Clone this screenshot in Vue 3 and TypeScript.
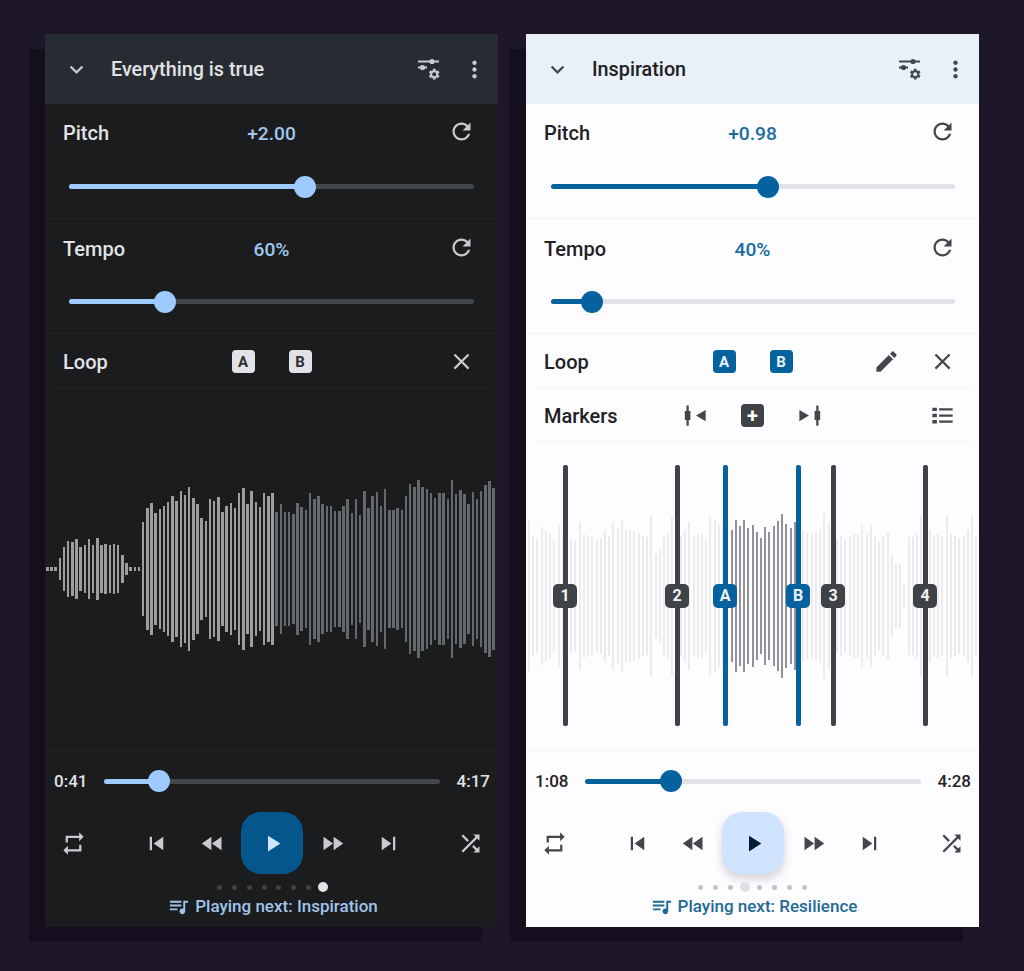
<script setup lang="ts">
/**
 * Two side by side player screens (dark / light) with pitch, tempo, loop and waveform.
 * Bar lists are half heights in px, in waveform order.
 */
interface Bar {
  h: number
  on: boolean
}

interface Marker {
  label: string
  left: number
  loop: boolean
}

interface Screen {
  theme: 'dark' | 'light'
  title: string
  pitch: string
  pitchAt: number
  tempo: string
  tempoAt: number
  bars: Bar[]
  markers: Marker[]
  current: string
  total: string
  seekAt: number
  page: number
  next: string
}

const bars = (list: number[], on: boolean): Bar[] => list.map((h) => ({ h, on }))

const darkPlayed = [
  2, 2, 2, 11, 22, 28, 27, 30, 22, 24, 30, 24, 31, 24, 25, 24, 25, 24, 14, 6, 2, 2, 2, 47, 61, 66, 56, 60, 63, 67, 73,
  68, 78, 74, 82, 71, 65, 51, 48, 70, 68, 72, 57, 63, 66, 61, 76, 81, 65, 78, 67, 62, 76, 73, 76,
]
const darkRest = [
  57, 65, 57, 57, 55, 66, 62, 59, 76, 70, 73, 65, 63, 63, 58, 58, 63, 70, 56, 70, 54, 78, 61, 73, 77, 63, 80, 59, 59,
  61, 59, 73, 85, 82, 89, 82, 80, 76, 71, 76, 76, 70, 89, 75, 79, 75, 65, 77, 70, 78, 84, 88, 81,
]
const lightBefore = [
  76, 59, 57, 69, 64, 62, 55, 71, 62, 60, 58, 56, 74, 62, 60, 59, 57, 58, 66, 60, 74, 67, 76, 66, 67, 64, 62, 60, 59,
  81, 42, 46, 59, 62, 79, 69, 60, 66, 74, 60, 62, 62, 57, 79, 76, 71, 73, 60,
]
const lightLoop = [66, 76, 70, 76, 68, 71, 64, 58, 69, 64, 70, 75, 82, 72, 68, 74]
const lightAfter = [
  60, 66, 63, 62, 64, 67, 83, 74, 72, 57, 60, 57, 59, 62, 62, 71, 62, 71, 60, 54, 60, 64, 42, 32, 32, 12, 59, 59, 62, 81,
  59, 66, 60, 62, 60, 81, 62, 60, 58, 60, 66, 81, 60,
]

const screens: Screen[] = [
  {
    theme: 'dark',
    title: 'Everything is true',
    pitch: '+2.00',
    pitchAt: 58.3,
    tempo: '60%',
    tempoAt: 23.7,
    bars: [...bars(darkPlayed, true), ...bars(darkRest, false)],
    markers: [],
    current: '0:41',
    total: '4:17',
    seekAt: 16.4,
    page: 7,
    next: 'Playing next: Inspiration',
  },
  {
    theme: 'light',
    title: 'Inspiration',
    pitch: '+0.98',
    pitchAt: 53.8,
    tempo: '40%',
    tempoAt: 10.1,
    bars: [...bars(lightBefore, false), ...bars(lightLoop, true), ...bars(lightAfter, false)],
    markers: [
      { label: '1', left: 39, loop: false },
      { label: '2', left: 151, loop: false },
      { label: 'A', left: 199, loop: true },
      { label: 'B', left: 272, loop: true },
      { label: '3', left: 307, loop: false },
      { label: '4', left: 399, loop: false },
    ],
    current: '1:08',
    total: '4:28',
    seekAt: 25.6,
    page: 3,
    next: 'Playing next: Resilience',
  },
]

const gear =
  'M19.14 12.94c.04-.3.06-.61.06-.94 0-.32-.02-.64-.07-.94l2.03-1.58c.18-.14.23-.41.12-.61l-1.92-3.32c-.12-.22-.37-.29-.59-.22l-2.39.96c-.5-.38-1.03-.7-1.62-.94l-.36-2.54c-.04-.24-.24-.41-.48-.41h-3.84c-.24 0-.43.17-.47.41l-.36 2.54c-.59.24-1.13.57-1.62.94l-2.39-.96c-.22-.08-.47 0-.59.22L2.74 8.87c-.12.21-.08.47.12.61l2.03 1.58c-.05.3-.09.63-.09.94s.02.64.07.94l-2.03 1.58c-.18.14-.23.41-.12.61l1.92 3.32c.12.22.37.29.59.22l2.39-.96c.5.38 1.03.7 1.62.94l.36 2.54c.05.24.24.41.48.41h3.84c.24 0 .44-.17.47-.41l.36-2.54c.59-.24 1.13-.56 1.62-.94l2.39.96c.22.08.47 0 .59-.22l1.92-3.32c.12-.22.07-.47-.12-.61l-2.01-1.58zM12 15.6c-1.98 0-3.6-1.62-3.6-3.6s1.62-3.6 3.6-3.6 3.6 1.62 3.6 3.6-1.62 3.6-3.6 3.6z'

const icons = {
  chevron: 'M16.59 8.59L12 13.17 7.41 8.59 6 10l6 6 6-6z',
  more: 'M12 8c1.1 0 2-.9 2-2s-.9-2-2-2-2 .9-2 2 .9 2 2 2zm0 2c-1.1 0-2 .9-2 2s.9 2 2 2 2-.9 2-2-.9-2-2-2zm0 6c-1.1 0-2 .9-2 2s.9 2 2 2 2-.9 2-2-.9-2-2-2z',
  reset:
    'M17.65 6.35C16.2 4.9 14.21 4 12 4c-4.42 0-7.99 3.58-7.99 8s3.57 8 7.99 8c3.73 0 6.84-2.55 7.73-6h-2.08c-.82 2.33-3.04 4-5.65 4-3.31 0-6-2.69-6-6s2.69-6 6-6c1.66 0 3.14.69 4.22 1.78L13 11h7V4l-2.35 2.35z',
  close:
    'M19 6.41L17.59 5 12 10.59 6.41 5 5 6.41 10.59 12 5 17.59 6.41 19 12 13.41 17.59 19 19 17.59 13.41 12z',
  edit: 'M3 17.25V21h3.75L17.81 9.94l-3.75-3.75L3 17.25zM20.71 7.04c.39-.39.39-1.02 0-1.41l-2.34-2.34c-.39-.39-1.02-.39-1.41 0l-1.83 1.83 3.75 3.75 1.83-1.83z',
  list: 'M3 5h4v3H3zM9 5.5h12v2H9zM3 10.5h4v3H3zM9 11h12v2H9zM3 16h4v3H3zM9 16.5h12v2H9z',
  prevMark: 'M4 3h2v5h1.5v8H6v5H4v-5H2.5V8H4zM21 7v10l-8.5-5z',
  nextMark: 'M18 3h2v5h1.5v8H20v5h-2v-5h-1.5V8H18zM3 7v10l8.5-5z',
  repeat: 'M7 7h10v3l4-4-4-4v3H5v6h2V7zm10 10H7v-3l-4 4 4 4v-3h12v-6h-2v4z',
  prev: 'M6 6h2v12H6zm3.5 6l8.5 6V6z',
  rewind: 'M11 18V6l-8.5 6 8.5 6zm.5-6l8.5 6V6l-8.5 6z',
  play: 'M8 5v14l11-7z',
  forward: 'M4 18l8.5-6L4 6v12zm9-12v12l8.5-6L13 6z',
  next: 'M6 18l8.5-6L6 6v12zM16 6v12h2V6h-2z',
  shuffle:
    'M10.59 9.17L5.41 4 4 5.41l5.17 5.17 1.42-1.41zM14.5 4l2.04 2.04L4 18.59 5.41 20 17.96 7.46 20 9.5V4h-5.5zm.33 9.41l-1.41 1.41 3.13 3.13L14.5 20H20v-5.5l-2.04 2.04-3.13-3.13z',
  queue:
    'M15 6H3v2h12V6zm0 4H3v2h12v-2zM3 16h8v-2H3v2zM17 6v8.18c-.31-.11-.65-.18-1-.18-1.66 0-3 1.34-3 3s1.34 3 3 3 3-1.34 3-3V8h3V6h-5z',
}
</script>

<template>
  <div class="page">
    <section v-for="s in screens" :key="s.theme" class="phone" :class="`phone--${s.theme}`">
      <header class="top">
        <svg class="icon top-chevron" viewBox="0 0 24 24"><path :d="icons.chevron" /></svg>
        <span class="top-title">{{ s.title }}</span>
        <svg class="icon tune" viewBox="0 0 24 24">
          <path d="M1 3.6h21v1.8H1zM1 9.6h9v1.8H1z" />
          <circle cx="15" cy="4.5" r="2.6" />
          <circle cx="5.5" cy="10.5" r="2.6" />
          <path :d="gear" transform="translate(10.5 10.5) scale(0.56)" />
        </svg>
        <svg class="icon" viewBox="0 0 24 24"><path :d="icons.more" /></svg>
      </header>

      <div class="param">
        <div class="row">
          <span class="label">Pitch</span>
          <span class="value">{{ s.pitch }}</span>
          <span class="actions">
            <svg class="icon" viewBox="0 0 24 24"><path :d="icons.reset" /></svg>
          </span>
        </div>
        <div class="slider">
          <div class="slider-fill" :style="{ width: s.pitchAt + '%' }"><i class="slider-thumb" /></div>
        </div>
      </div>

      <div class="param">
        <div class="row">
          <span class="label">Tempo</span>
          <span class="value">{{ s.tempo }}</span>
          <span class="actions">
            <svg class="icon" viewBox="0 0 24 24"><path :d="icons.reset" /></svg>
          </span>
        </div>
        <div class="slider">
          <div class="slider-fill" :style="{ width: s.tempoAt + '%' }"><i class="slider-thumb" /></div>
        </div>
      </div>

      <div class="row row--tool">
        <span class="label">Loop</span>
        <span class="loop-keys">
          <b class="key">A</b>
          <b class="key">B</b>
        </span>
        <span class="actions">
          <svg v-if="s.theme === 'light'" class="icon" viewBox="0 0 24 24"><path :d="icons.edit" /></svg>
          <svg class="icon" viewBox="0 0 24 24"><path :d="icons.close" /></svg>
        </span>
      </div>

      <div v-if="s.markers.length" class="row row--tool">
        <span class="label">Markers</span>
        <span class="marker-tools">
          <svg class="icon" viewBox="0 0 24 24"><path :d="icons.prevMark" /></svg>
          <b class="key key--add">+</b>
          <svg class="icon" viewBox="0 0 24 24"><path :d="icons.nextMark" /></svg>
        </span>
        <span class="actions">
          <svg class="icon" viewBox="0 0 24 24"><path :d="icons.list" /></svg>
        </span>
      </div>

      <div class="wave">
        <div class="wave-bars">
          <i
            v-for="(bar, i) in s.bars"
            :key="i"
            class="bar"
            :class="{ 'bar--on': bar.on }"
            :style="{ height: bar.h * 2 + 'px' }"
          />
        </div>
        <div
          v-for="m in s.markers"
          :key="m.label"
          class="marker"
          :class="{ 'marker--loop': m.loop }"
          :style="{ left: m.left + 'px' }"
        >
          <b class="marker-badge">{{ m.label }}</b>
        </div>
      </div>

      <div class="transport">
        <div class="seek">
          <span class="time">{{ s.current }}</span>
          <div class="slider slider--seek">
            <div class="slider-fill" :style="{ width: s.seekAt + '%' }"><i class="slider-thumb" /></div>
          </div>
          <span class="time time--end">{{ s.total }}</span>
        </div>

        <div class="controls">
          <svg class="icon" viewBox="0 0 24 24"><path :d="icons.repeat" /></svg>
          <div class="controls-main">
            <svg class="icon" viewBox="0 0 24 24"><path :d="icons.prev" /></svg>
            <svg class="icon" viewBox="0 0 24 24"><path :d="icons.rewind" /></svg>
            <div class="play">
              <svg class="icon" viewBox="0 0 24 24"><path :d="icons.play" /></svg>
            </div>
            <svg class="icon" viewBox="0 0 24 24"><path :d="icons.forward" /></svg>
            <svg class="icon" viewBox="0 0 24 24"><path :d="icons.next" /></svg>
          </div>
          <svg class="icon" viewBox="0 0 24 24"><path :d="icons.shuffle" /></svg>
        </div>

        <div class="dots">
          <span v-for="n in 8" :key="n" class="dot-slot">
            <i class="dot" :class="{ 'dot--active': n - 1 === s.page }" />
          </span>
        </div>

        <div class="next">
          <svg class="icon next-icon" viewBox="0 0 24 24"><path :d="icons.queue" /></svg>
          <span>{{ s.next }}</span>
        </div>
      </div>
    </section>
  </div>
</template>

<style scoped>
.page {
  display: flex;
  gap: 28px;
  padding: 34px 0 44px 45px;
  font-family: Roboto, 'Liberation Sans', sans-serif;
}

.page * {
  box-sizing: border-box;
}

.phone {
  display: flex;
  flex-direction: column;
  flex: none;
  width: 453px;
  height: 893px;
  overflow: hidden;
  background: var(--surface);
  color: var(--text);
  box-shadow: -16px 15px 0 #150e1f;
}

.phone--dark {
  --surface: #1a1c1e;
  --bar-top: #272c33;
  --text: #e2e2e6;
  --icon: #c9cacd;
  --accent: #9ecaff;
  --value: #a0c8ee;
  --track: #44474a;
  --rule: #222426;
  --key-bg: #e2e2e6;
  --key-text: #2d3033;
  --bar-off: #66696c;
  --bar-on: #9c9ea0;
  --bar-w: 2.5px;
  --bar-gap: 1.68px;
  --play-bg: #05568d;
  --play-icon: #d1e4ff;
  --dot: #3f4144;
  --dot-on: #e2e2e6;
  --next: #a0c4ea;
}

.phone--light {
  --surface: #fdfcff;
  --bar-top: #e8f0f9;
  --text: #1f2123;
  --icon: #44474a;
  --accent: #05629f;
  --value: #1a6b9c;
  --track: #e2e2e6;
  --rule: #f3f3f6;
  --key-bg: #05629f;
  --key-text: #e8f3fc;
  --bar-off: #ececef;
  --bar-on: #929397;
  --bar-w: 2px;
  --bar-gap: 2.23px;
  --play-bg: #d1e4ff;
  --play-icon: #001d36;
  --dot: #c2c2c6;
  --dot-on: #e0e0e4;
  --next: #1d6b94;
}

.icon {
  flex: none;
  width: 27px;
  height: 27px;
  fill: var(--icon);
}

.top {
  flex: none;
  display: flex;
  align-items: center;
  height: 70px;
  padding: 0 10px 0 18px;
  background: var(--bar-top);
}

.top-chevron {
  margin-right: 21px;
}

.top-title {
  flex: 1;
  font-size: 19.8px;
  font-weight: 500;
}

.tune {
  width: 24px;
  height: 24px;
  margin-right: 20px;
}

.param {
  flex: none;
  height: 115px;
  border-bottom: 1px solid var(--rule);
}

.row {
  display: grid;
  grid-template-columns: 1fr auto 1fr;
  align-items: center;
  height: 58px;
  padding: 0 18px;
}

.param + .param .row {
  height: 60px;
}

.row--tool {
  flex: none;
  height: 54px;
  margin: 0 9px;
  padding: 2px 9px 0;
  border-bottom: 1px solid var(--rule);
}

.label {
  font-size: 20px;
  font-weight: 500;
}

.value {
  font-size: 19.2px;
  font-weight: 500;
  color: var(--value);
}

.actions {
  display: flex;
  justify-content: flex-end;
  align-items: center;
  gap: 29px;
  padding-right: 5px;
}

.param .actions {
  margin-bottom: 4px;
}

.slider {
  position: relative;
  height: 5px;
  margin: 22px 24px 0;
  border-radius: 3px;
  background: var(--track);
}

.param + .param .slider {
  margin-top: 20px;
}

.phone--light .param .slider {
  margin-left: 25px;
}

.slider--seek {
  margin: 0;
}

.slider-fill {
  position: relative;
  height: 100%;
  border-radius: 3px;
  background: var(--accent);
}

.slider-thumb {
  position: absolute;
  top: 50%;
  right: -11px;
  width: 22px;
  height: 22px;
  margin-top: -11px;
  border-radius: 50%;
  background: var(--accent);
}

.loop-keys {
  display: flex;
  gap: 34px;
}

.key {
  display: flex;
  align-items: center;
  justify-content: center;
  width: 23px;
  height: 23px;
  border-radius: 4px;
  background: var(--key-bg);
  color: var(--key-text);
  font-size: 15px;
  font-weight: 700;
}

.key--add {
  background: #3f4246;
  color: #fff;
  font-size: 20px;
}

.marker-tools {
  display: flex;
  align-items: center;
  gap: 32px;
}

.wave {
  position: relative;
  flex: 1;
  min-height: 0;
  overflow: hidden;
  border-bottom: 1px solid var(--rule);
}

.wave-bars {
  display: flex;
  align-items: center;
  gap: var(--bar-gap);
  height: 100%;
  padding-left: 1px;
}

.phone--light .wave-bars {
  padding-left: 2px;
}

.bar {
  flex: none;
  width: var(--bar-w);
  background: var(--bar-off);
}

.bar--on {
  background: var(--bar-on);
}

.marker {
  position: absolute;
  top: 23px;
  bottom: 24px;
  width: 5px;
  margin-left: -2.5px;
  border-radius: 2px;
  background: #3f4246;
}

.marker--loop {
  background: #05629f;
}

.marker-badge {
  position: absolute;
  top: 50%;
  left: 50%;
  display: flex;
  align-items: center;
  justify-content: center;
  width: 24px;
  height: 24px;
  margin: -12px 0 0 -12px;
  border-radius: 5px;
  background: inherit;
  color: #f2f2f4;
  font-size: 16px;
  font-weight: 700;
}

.transport {
  flex: none;
  height: 176px;
  padding-top: 19px;
}

.seek {
  display: grid;
  grid-template-columns: 50px 1fr 50px;
  align-items: center;
  height: 22px;
  padding: 0 8px 0 9px;
}

.time {
  font-size: 17px;
  font-weight: 500;
}

.time--end {
  text-align: right;
}

.controls {
  display: flex;
  align-items: center;
  justify-content: space-between;
  height: 62px;
  margin-top: 20px;
  padding: 0 14px 0 15px;
}

.controls-main {
  display: flex;
  align-items: center;
  gap: 29px;
}

.play {
  display: flex;
  align-items: center;
  justify-content: center;
  width: 62px;
  height: 62px;
  margin: 0 -13.5px;
  border-radius: 20px;
  background: var(--play-bg);
}

.play .icon {
  fill: var(--play-icon);
}

.phone--light .play {
  box-shadow: 0 5px 10px rgba(40, 50, 70, 0.2);
}

.dots {
  display: flex;
  justify-content: center;
  align-items: center;
  height: 10px;
  margin-top: 8px;
}

.dot-slot {
  display: flex;
  justify-content: center;
  width: 14.8px;
}

.dot {
  width: 5px;
  height: 5px;
  border-radius: 50%;
  background: var(--dot);
}

.dot--active {
  width: 10px;
  height: 10px;
  background: var(--dot-on);
}

.next {
  display: flex;
  align-items: center;
  justify-content: center;
  gap: 5px;
  height: 20px;
  margin-top: 4px;
  padding-left: 2px;
  color: var(--next);
  font-size: 17px;
  font-weight: 500;
}

.next-icon {
  width: 23px;
  height: 23px;
  fill: var(--next);
}
</style>

<style>
html,
body {
  margin: 0;
  background: #1e1629;
}
</style>
